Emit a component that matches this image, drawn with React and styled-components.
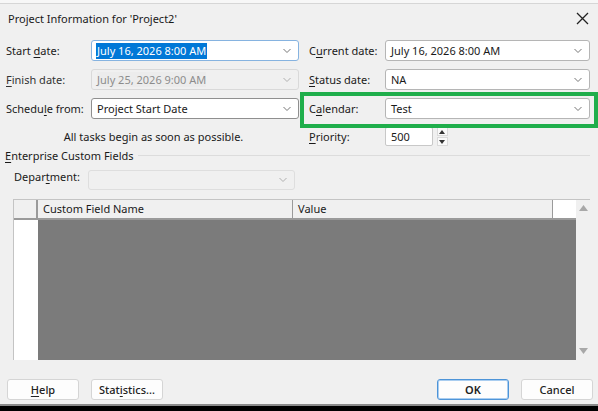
import React from 'react';
import styled, { createGlobalStyle, css } from 'styled-components';

const GlobalStyle = createGlobalStyle`
  html, body {
    margin: 0;
    padding: 0;
    background: #f0f0f0;
  }
  body {
    font-family: "Noto Sans", "Open Sans", sans-serif;
    font-size: 11px;
    color: #1a1a1a;
  }
`;

const Window = styled.div`
  width: 598px;
  height: 411px;
  display: flex;
  flex-direction: column;
  background: #f0f0f0;
  overflow: hidden;
`;

const TopStrip = styled.div`
  height: 3px;
  background: #f7f7f7;
  border-bottom: 1px solid #d6d6d6;
`;

const TitleBar = styled.div`
  height: 28px;
  display: flex;
  align-items: center;
  justify-content: space-between;
  padding: 0 8px 0 8px;
  font-size: 11px;
`;

const CloseButton = styled.div`
  width: 16px;
  height: 16px;
  display: flex;
  align-items: center;
  justify-content: center;
`;

const Form = styled.div`
  display: grid;
  grid-template-columns: 85px 208px 86px 205px;
  row-gap: 8px;
  padding: 8px 8px 0 6px;
`;

const Label = styled.div`
  height: 21px;
  line-height: 21px;
  white-space: nowrap;
  padding-left: ${p => (p.right ? 10 : 0)}px;
  color: ${p => (p.muted ? '#333' : '#1a1a1a')};
`;

const Key = styled.span`
  text-decoration: underline;
  text-underline-offset: 2px;
`;

const Combo = styled.div`
  position: relative;
  height: 21px;
  box-sizing: border-box;
  display: flex;
  align-items: center;
  padding: 0 20px 0 5px;
  background: ${p => (p.disabled ? '#f0f0f0' : '#ffffff')};
  border: 1px solid ${p => (p.focused ? '#86b3e0' : p.disabled ? '#d9d9d9' : p.strong ? '#8f8f8f' : '#b5b5b5')};
  border-radius: 3px;
  color: ${p => (p.disabled ? '#8c8c8c' : '#1a1a1a')};
  white-space: nowrap;
  ${p => p.disabled && css`
    & > span:first-child {
      background: #ececec;
    }
  `}
`;

const Selected = styled.span`
  background: #0078d7;
  color: #fff;
  padding: 0 1px;
  margin-left: -1px;
  line-height: 16px;
`;

const DropIcon = styled.svg`
  position: absolute;
  right: 6px;
  top: 50%;
  margin-top: -3px;
`;

const Chevron = ({ color = '#777' }) => (
  <DropIcon width="10" height="6" viewBox="0 0 10 6">
    <polyline points="1.5,1 5,4.5 8.5,1" fill="none" stroke={color} strokeWidth="1" />
  </DropIcon>
);

const Note = styled.div`
  grid-column: 1 / span 2;
  height: 19px;
  line-height: 19px;
  text-align: center;
  padding-left: 2px;
`;

const Highlight = styled.div`
  grid-column: 3 / span 2;
  display: grid;
  grid-template-columns: 86px 205px;
  position: relative;
  &::after {
    content: '';
    position: absolute;
    left: 1px;
    right: -8px;
    top: -6px;
    bottom: -9px;
    border: 4.5px solid #1fae4b;
    pointer-events: none;
  }
`;

const PriorityRow = styled.div`
  display: flex;
  align-items: center;
  gap: 3px;
  height: 19px;
`;

const NumberBox = styled.div`
  width: 48px;
  height: 19px;
  box-sizing: border-box;
  background: #fff;
  border: 1px solid #c8c8c8;
  border-radius: 2px;
  display: flex;
  align-items: center;
  padding-left: 5px;
`;

const Spinner = styled.div`
  width: 12px;
  height: 19px;
  display: flex;
  flex-direction: column;
  justify-content: space-between;
  align-items: center;
`;

const SpinBtn = styled.div`
  width: 11px;
  height: 9px;
  background: #fafafa;
  border: 1px solid #dadada;
  box-sizing: border-box;
  display: flex;
  align-items: center;
  justify-content: center;
`;

const Arrow = ({ up }) => (
  <svg width="6" height="4" viewBox="0 0 6 4">
    <polygon points={up ? '0,4 6,4 3,0' : '0,0 6,0 3,4'} fill="#333" />
  </svg>
);

const PriorityLabel = styled(Label)`
  height: 19px;
  line-height: 19px;
`;

const Section = styled.div`
  display: flex;
  align-items: center;
  gap: 4px;
  padding: 1px 8px 0 5px;
  height: 16px;
  &::after {
    content: '';
    flex: 1;
    height: 1px;
    background: #dcdcdc;
  }
`;

const DeptRow = styled.div`
  display: flex;
  align-items: flex-start;
  padding: 7px 0 0 14px;
`;

const DeptLabel = styled.div`
  width: 74px;
  line-height: 14px;
  white-space: nowrap;
`;

const DeptCombo = styled(Combo)`
  width: 207px;
  height: 20px;
  border-color: #dedede;
`;

const Table = styled.div`
  margin: 9px 8px 0 13px;
  height: 161px;
  display: flex;
  border-top: 1px solid #c4c4c4;
  border-left: 1px solid #c4c4c4;
  box-sizing: border-box;
`;

const RowHeaders = styled.div`
  width: 24px;
  display: flex;
  flex-direction: column;
  background: #fff;
`;

const Corner = styled.div`
  height: 18px;
  background: #f0f0f0;
  border-right: 2px solid #9a9a9a;
  border-bottom: 2px solid #9a9a9a;
`;

const Columns = styled.div`
  flex: 1;
  display: flex;
  flex-direction: column;
`;

const HeaderRow = styled.div`
  display: flex;
  height: 18px;
  border-bottom: 2px solid #9a9a9a;
  background: #f0f0f0;
`;

const HeadCell = styled.div`
  width: ${p => p.w}px;
  box-sizing: border-box;
  padding-left: 5px;
  line-height: 18px;
  border-right: ${p => (p.last ? 'none' : '1.5px solid #9a9a9a')};
  background: ${p => (p.blank ? '#fff' : '#f0f0f0')};
`;

const Body = styled.div`
  flex: 1;
  display: flex;
`;

const Gray = styled.div`
  width: 538px;
  background: #7b7b7b;
`;

const ScrollBar = styled.div`
  width: 14px;
  display: flex;
  flex-direction: column;
  justify-content: space-between;
  align-items: center;
  padding: 5px 0 6px;
  background: #f0f0f0;
`;

const ScrollArrow = ({ up }) => (
  <svg width="9" height="6" viewBox="0 0 9 6">
    <polygon points={up ? '0,6 9,6 4.5,0' : '0,0 9,0 4.5,6'} fill="#a8a8a8" />
  </svg>
);

const Footer = styled.div`
  display: flex;
  justify-content: space-between;
  padding: 19px 5px 0 7px;
`;

const ButtonGroup = styled.div`
  display: flex;
  gap: ${p => p.gap}px;
`;

const Button = styled.div`
  width: 72px;
  height: 21px;
  box-sizing: border-box;
  background: #fdfdfd;
  border: 1px solid ${p => (p.primary ? '#4d94d8' : '#d5d5d5')};
  border-radius: 3px;
  line-height: 19px;
  text-align: center;
  font-weight: ${p => (p.primary ? 600 : 500)};
  color: #222;
  ${p => p.primary && css`
    box-shadow: inset 0 0 0 1px #a9cdf0;
  `}
`;

const Bottom = styled.div`
  margin-top: auto;
  height: 5px;
  background: #000;
  border-top: 2px solid #8a8a8a;
`;

export default function App() {
  return (
    <Window>
      <GlobalStyle />
      <TopStrip />
      <TitleBar>
        <span>Project Information for 'Project2'</span>
        <CloseButton>
          <svg width="13" height="13" viewBox="0 0 13 13">
            <path d="M1 1 L12 12 M12 1 L1 12" stroke="#222" strokeWidth="1.3" />
          </svg>
        </CloseButton>
      </TitleBar>

      <Form>
        <Label>Start <Key>d</Key>ate:</Label>
        <Combo focused>
          <Selected>July 16, 2026 8:00 AM</Selected>
          <Chevron />
        </Combo>
        <Label right>C<Key>u</Key>rrent date:</Label>
        <Combo>
          July 16, 2026 8:00 AM
          <Chevron />
        </Combo>

        <Label muted><Key>F</Key>inish date:</Label>
        <Combo disabled>
          <span>July 25, 2026 9:00 AM</span>
          <Chevron color="#b0b0b0" />
        </Combo>
        <Label right><Key>S</Key>tatus date:</Label>
        <Combo>
          NA
          <Chevron />
        </Combo>

        <Label>Schedu<Key>l</Key>e from:</Label>
        <Combo strong>
          Project Start Date
          <Chevron />
        </Combo>
        <Highlight>
          <Label right>C<Key>a</Key>lendar:</Label>
          <Combo>
            Test
            <Chevron />
          </Combo>
        </Highlight>

        <Note>All tasks begin as soon as possible.</Note>
        <PriorityLabel right><Key>P</Key>riority:</PriorityLabel>
        <PriorityRow>
          <NumberBox>500</NumberBox>
          <Spinner>
            <SpinBtn><Arrow up /></SpinBtn>
            <SpinBtn><Arrow /></SpinBtn>
          </Spinner>
        </PriorityRow>
      </Form>

      <Section>
        <span><Key>E</Key>nterprise Custom Fields</span>
      </Section>

      <DeptRow>
        <DeptLabel>Depar<Key>t</Key>ment:</DeptLabel>
        <DeptCombo disabled>
          <Chevron color="#b0b0b0" />
        </DeptCombo>
      </DeptRow>

      <Table>
        <RowHeaders>
          <Corner />
        </RowHeaders>
        <Columns>
          <HeaderRow>
            <HeadCell w={255}>Custom Field Name</HeadCell>
            <HeadCell w={260}>Value</HeadCell>
            <HeadCell w={23} blank last />
          </HeaderRow>
          <Body>
            <Gray />
          </Body>
        </Columns>
        <ScrollBar>
          <ScrollArrow up />
          <ScrollArrow />
        </ScrollBar>
      </Table>

      <Footer>
        <ButtonGroup gap={12}>
          <Button><Key>H</Key>elp</Button>
          <Button>Stat<Key>i</Key>stics...</Button>
        </ButtonGroup>
        <ButtonGroup gap={12}>
          <Button primary>OK</Button>
          <Button>Cancel</Button>
        </ButtonGroup>
      </Footer>
      <Bottom />
    </Window>
  );
}
